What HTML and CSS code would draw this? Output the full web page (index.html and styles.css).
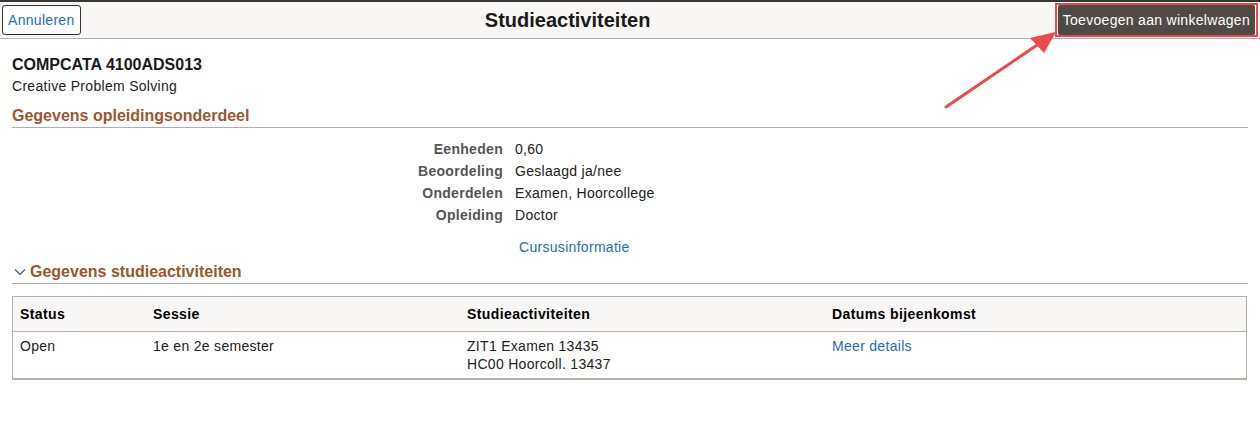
FILE: index.html
```html
<!DOCTYPE html>
<html lang="nl">
  <head>
    <meta charset="utf-8">
    <meta name="viewport" content="width=device-width, initial-scale=1.0">
    <title>Studieactiviteiten</title>
    <link rel="stylesheet" href="styles.css">
  </head>
  <body>
    <div class="topbar">
      <button class="btn-cancel">Annuleren</button>
      <h1 class="title">Studieactiviteiten</h1>
      <div class="highlight">
        <button class="btn-add">Toevoegen aan winkelwagen</button>
      </div>
    </div>

    <!-- annotatie pijl -->
    <svg class="arrow" width="1260" height="426" viewBox="0 0 1260 426">
      <line x1="946" y1="107" x2="1040" y2="43" stroke="#f04848" stroke-width="3" stroke-linecap="round"/>
      <polygon points="1056,32 1030,38 1044,53" fill="#f04848"/>
    </svg>

    <div class="content">
      <div class="course-code">COMPCATA 4100ADS013</div>
      <div class="course-name">Creative Problem Solving</div>

      <h2 class="section">Gegevens opleidingsonderdeel</h2>

      <div class="details">
        <div class="label">Eenheden</div><div class="value">0,60</div>
        <div class="label">Beoordeling</div><div class="value">Geslaagd ja/nee</div>
        <div class="label">Onderdelen</div><div class="value">Examen, Hoorcollege</div>
        <div class="label">Opleiding</div><div class="value">Doctor</div>
      </div>
      <div class="info-link"><a href="#">Cursusinformatie</a></div>

      <h2 class="section collapsible">
        <svg class="chevron" width="12" height="8" viewBox="0 0 12 8"><path d="M1 1.5 L6 6.5 L11 1.5" fill="none" stroke="#555" stroke-width="1.2"/></svg>
        Gegevens studieactiviteiten
      </h2>

      <table class="activities">
        <thead>
          <tr>
            <th class="c1">Status</th>
            <th class="c2">Sessie</th>
            <th class="c3">Studieactiviteiten</th>
            <th>Datums bijeenkomst</th>
          </tr>
        </thead>
        <tbody>
          <tr>
            <td>Open</td>
            <td>1e en 2e semester</td>
            <td>ZIT1 Examen 13435<br>HC00 Hoorcoll. 13437</td>
            <td><a href="#">Meer details</a></td>
          </tr>
        </tbody>
      </table>
    </div>
  </body>
</html>
```

FILE: styles.css
```css
body {
  margin: 0;
  font-family: "Liberation Sans", Arial, sans-serif;
  font-size: 14px;
  letter-spacing: 0.3px;
  color: #222;
  background: #fff;
}

a {
  color: #1e6fb7;
  text-decoration: none;
}

.topbar {
  display: flex;
  align-items: center;
  height: 36px;
  background: #f8f7f5;
  border-top: 2px solid #3a3633;
  border-bottom: 1px solid #b8b2ac;
  padding: 0 2px 0 2px;
}

.btn-cancel {
  height: 30px;
  padding: 0 5px;
  font-family: inherit;
  font-size: 14px;
  letter-spacing: 0.3px;
  color: #1e6fb7;
  background: #fff;
  border: 1px solid #333;
  border-radius: 3px;
}

.title {
  flex: 1;
  margin: 0;
  text-align: center;
  font-size: 20px;
  letter-spacing: 0;
  font-weight: bold;
  color: #1a1a1a;
}

.highlight {
  border: 2px solid #f04848;
  padding: 0 1px;
}

.btn-add {
  display: block;
  height: 30px;
  padding: 0 5px;
  font-family: inherit;
  font-size: 14px;
  letter-spacing: 0.3px;
  color: #fff;
  background: #4f4a45;
  border: none;
  border-radius: 2px;
}

.arrow {
  position: absolute;
  left: 0;
  top: 0;
  pointer-events: none;
}

.content {
  padding: 16px 12px 0 12px;
}

.course-code {
  font-size: 16px;
  font-weight: bold;
  letter-spacing: 0;
  color: #1a1a1a;
  line-height: 20px;
}

.course-name {
  line-height: 20px;
  margin-top: 1px;
}

.section {
  margin: 10px 0 0 0;
  font-size: 16px;
  font-weight: bold;
  letter-spacing: 0;
  color: #9c5630;
  line-height: 20px;
  padding-bottom: 1px;
  border-bottom: 1px solid #b4afaa;
}

.collapsible {
  margin-top: 5px;
  display: flex;
  align-items: center;
  gap: 4px;
}

.chevron {
  margin-left: 2px;
}

.details {
  display: grid;
  grid-template-columns: 491px auto;
  column-gap: 12px;
  row-gap: 3px;
  margin-top: 12px;
  line-height: 19px;
}

.label {
  text-align: right;
  font-weight: bold;
  color: #555;
}

.info-link {
  margin: 13px 0 0 507px;
  line-height: 19px;
}

.activities {
  width: 1235px;
  margin-top: 12px;
  border-collapse: collapse;
  border: 1px solid #b8b2ac;
  border-bottom: 2px solid #b8b2ac;
}

.activities th {
  background: #f8f7f5;
  text-align: left;
  font-weight: bold;
  letter-spacing: 0.4px;
  color: #000;
  height: 34px;
  padding: 0 7px;
  border-bottom: 1px solid #b8b2ac;
}

.activities td {
  vertical-align: top;
  padding: 5px 7px 5px 7px;
  line-height: 18px;
}

.c1 { width: 119px; }
.c2 { width: 300px; }
.c3 { width: 351px; }
```
